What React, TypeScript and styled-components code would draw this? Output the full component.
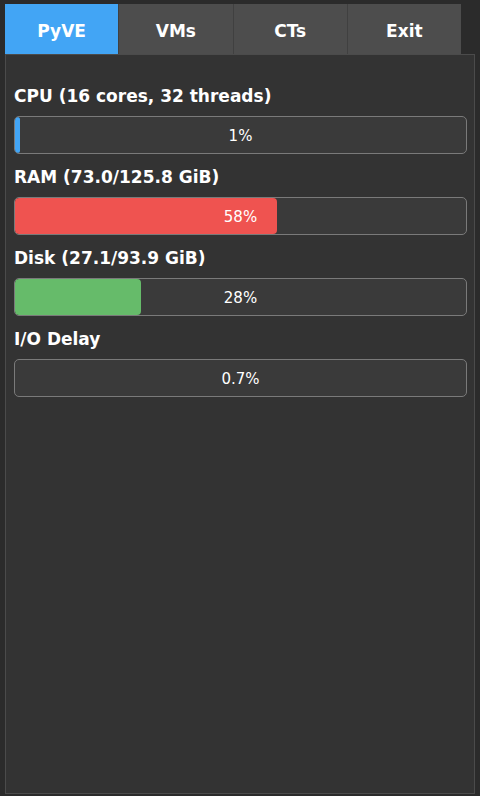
import styled, { createGlobalStyle } from 'styled-components';

const GlobalStyle = createGlobalStyle`
	html, body {
		margin: 0;
		padding: 0;
		background: #2b2b2b;
	}
	* {
		box-sizing: border-box;
	}
`;

const Wrapper = styled.div`
	display: flex;
	flex-direction: column;
	height: 796px;
	padding: 4px 5px 2px 5px;
	font-family: 'DejaVu Sans', Verdana, sans-serif;
	color: #ffffff;
`;

const TabBar = styled.div`
	display: flex;
	width: 456px;
	height: 50px;
`;

const Tab = styled.button<{ $active?: boolean }>`
	flex: 1;
	height: 50px;
	padding: 3px 0 0;
	border: none;
	border-right: 1px solid #404040;
	background-color: ${(p) => (p.$active ? '#42a5f5' : '#4d4d4d')};
	color: #ffffff;
	font-family: inherit;
	font-weight: bold;
	font-size: 17px;
	cursor: pointer;

	&:last-child {
		border-right: none;
	}
`;

const Panel = styled.div`
	flex: 1;
	display: flex;
	flex-direction: column;
	gap: 13px;
	background-color: #333333;
	border: 1px solid #4b4b4b;
	padding: 31px 7px 0 8px;
`;

const Stat = styled.div`
	display: flex;
	flex-direction: column;
	gap: 10px;
`;

const Label = styled.div`
	font-weight: bold;
	font-size: 17px;
	line-height: 20px;
`;

const Track = styled.div`
	position: relative;
	height: 38px;
	border: 1px solid #7a7a7a;
	border-radius: 5px;
	background-color: #3a3a3a;
	overflow: hidden;
`;

const Fill = styled.div<{ $color: string }>`
	height: 100%;
	border-radius: 4px;
	background-color: ${(p) => p.$color};
`;

const Value = styled.span`
	position: absolute;
	inset: 0;
	display: flex;
	align-items: center;
	justify-content: center;
	padding-top: 2px;
	font-size: 15px;
`;

const stats = [
	{ label: 'CPU (16 cores, 32 threads)', value: '1%', pct: 1, color: '#42a5f5' },
	{ label: 'RAM (73.0/125.8 GiB)', value: '58%', pct: 58, color: '#ef5350' },
	{ label: 'Disk (27.1/93.9 GiB)', value: '28%', pct: 28, color: '#66bb6a' },
	{ label: 'I/O Delay', value: '0.7%', pct: 0, color: '#42a5f5' },
];

export default function App() {
	return (
		<Wrapper>
			<GlobalStyle />
			<TabBar>
				<Tab $active>PyVE</Tab>
				<Tab>VMs</Tab>
				<Tab>CTs</Tab>
				<Tab>Exit</Tab>
			</TabBar>
			<Panel>
				{stats.map((s) => (
					<Stat key={s.label}>
						<Label>{s.label}</Label>
						<Track>
							<Fill $color={s.color} style={{ width: `${s.pct}%` }} />
							<Value>{s.value}</Value>
						</Track>
					</Stat>
				))}
			</Panel>
		</Wrapper>
	);
}
